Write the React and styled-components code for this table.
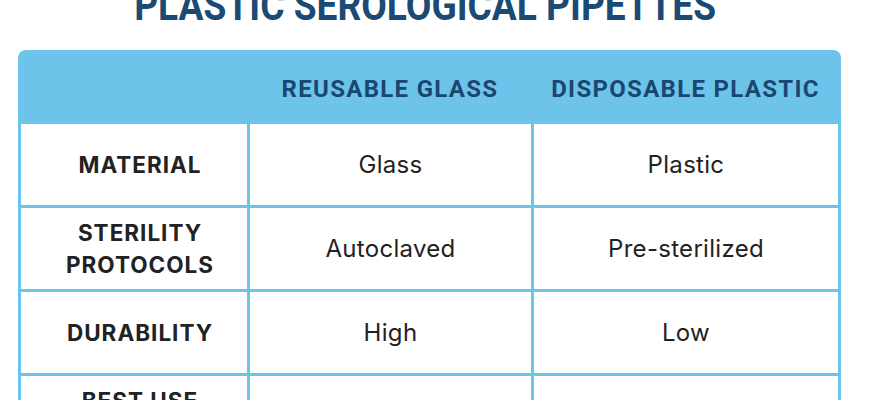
import styled, { createGlobalStyle } from 'styled-components';

const GlobalStyle = createGlobalStyle`
    html, body {
        margin: 0;
        padding: 0;
        background: #ffffff;
    }
    body {
        width: 870px;
        height: 400px;
        overflow: hidden;
    }
`;

const LINE = '#6cc4ea';

const Page = styled.div`
    width: 870px;
    height: 400px;
    overflow: hidden;
    display: flex;
    flex-direction: column;
`;

const Title = styled.h1`
    flex-shrink: 0;
    margin: -18px 0 0;
    padding-right: 20px;
    height: 68px;
    display: flex;
    justify-content: center;
    font-family: 'Roboto', 'DejaVu Sans Condensed', sans-serif;
    font-weight: 700;
    font-size: 42px;
    line-height: 48px;
    color: #1b4a75;

    span {
        display: inline-block;
        transform: scaleX(0.884);
        white-space: nowrap;
    }
`;

const Table = styled.div`
    flex-shrink: 0;
    width: 823px;
    margin-left: 18px;
    display: flex;
    flex-direction: column;
`;

const HeaderRow = styled.div`
    height: 74px;
    background: ${LINE};
    border-radius: 8px 8px 0 0;
    display: grid;
    grid-template-columns: 232px 284px 307px;
`;

const HeadCell = styled.div`
    display: flex;
    align-items: center;
    justify-content: center;
    padding-top: 4px;
    padding-right: 4px;
    font-family: 'Roboto', 'DejaVu Sans Condensed', sans-serif;
    font-weight: 700;
    font-size: 24px;
    letter-spacing: 1.3px;
    color: #1a4772;
    white-space: nowrap;
`;

const Body = styled.div`
    background: ${LINE};
    padding: 0 3px;
    display: grid;
    grid-template-columns: 226px 281px 304px;
    grid-auto-rows: 81px;
    column-gap: 3px;
    row-gap: 3px;
`;

const Cell = styled.div`
    background: #ffffff;
    display: flex;
    align-items: center;
    justify-content: center;
    text-align: center;
    font-family: 'Inter', 'Roboto', sans-serif;
    color: #222222;
    font-size: ${(p) => (p.$label ? '22.5px' : '24px')};
    font-weight: ${(p) => (p.$label ? 700 : 400)};
    letter-spacing: ${(p) => (p.$label ? '1px' : '0.3px')};
    line-height: 32px;
    padding-left: ${(p) => (p.$label ? '12px' : '0')};
`;

const rows = [
    ['MATERIAL', 'Glass', 'Plastic'],
    ['STERILITY\nPROTOCOLS', 'Autoclaved', 'Pre-sterilized'],
    ['DURABILITY', 'High', 'Low'],
    ['BEST USE\nCASES', '', ''],
];

const App = () => {
    return (
        <Page>
            <GlobalStyle />
            <Title>
                <span>PLASTIC SEROLOGICAL PIPETTES</span>
            </Title>
            <Table>
                <HeaderRow>
                    <HeadCell />
                    <HeadCell>REUSABLE GLASS</HeadCell>
                    <HeadCell>DISPOSABLE PLASTIC</HeadCell>
                </HeaderRow>
                <Body>
                    {rows.map((r) => (
                        <>
                            <Cell key={r[0]} $label>
                                <span>
                                    {r[0].split('\n').map((l, i) => (
                                        <div key={i}>{l}</div>
                                    ))}
                                </span>
                            </Cell>
                            <Cell key={r[0] + '1'}>{r[1]}</Cell>
                            <Cell key={r[0] + '2'}>{r[2]}</Cell>
                        </>
                    ))}
                </Body>
            </Table>
        </Page>
    );
};

export default App;
